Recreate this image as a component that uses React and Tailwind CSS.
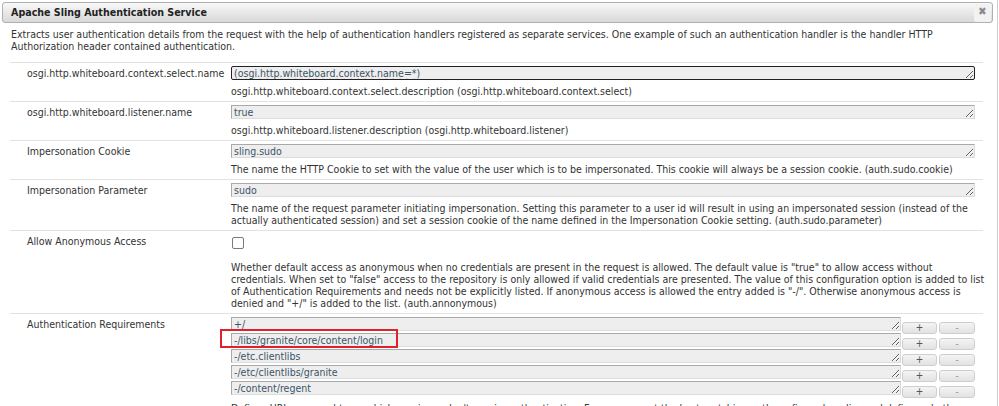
import React from "react";

const font = { fontFamily: '"DejaVu Sans Condensed", "DejaVu Sans", sans-serif', fontStretch: "condensed" };

const Field = ({ value, focused, squiggle }) => (
  <textarea
    readOnly
    rows={1}
    value={value}
    spellCheck={false}
    className={
      "block w-[744px] h-[14px] min-h-[14px] overflow-hidden bg-[#eeeeee] px-[2px] text-[10.5px] leading-[12px] text-[#3c5468] outline-none " +
      (focused
        ? "border border-[#222] rounded-[2px]"
        : "border border-t-[#a9a9a9] border-l-[#a9a9a9] border-r-[#dcdcdc] border-b-[#dcdcdc]")
    }
    style={squiggle ? { textDecoration: "underline wavy #d33", textUnderlineOffset: "1px" } : undefined}
  />
);

const Row = ({ label, children }) => (
  <div className="grid grid-cols-[221px_1fr] border-t border-[#e2e2e2] pt-[3px] pb-[4px]">
    <div className="pl-[17px] pt-[1px] leading-[12px]">{label}</div>
    <div className="-mr-[3px]">{children}</div>
  </div>
);

const Desc = ({ children, className = "" }) => (
  <p className={"mt-[5px] leading-[12px] " + className}>{children}</p>
);

const reqs = [
  "+/",
  "-/libs/granite/core/content/login",
  "-/etc.clientlibs",
  "-/etc/clientlibs/granite",
  "-/content/regent",
];

export default function App() {
  return (
    <div className="w-[999px] h-[406px] overflow-hidden bg-white text-[10.5px] text-[#333]" style={font}>
      <div className="w-[998px] h-[406px] border-r border-[#cfcfcf] pt-[2px] pl-[2px] pr-[4px]">
        <div className="flex h-[21px] items-center justify-between rounded-[3px] border border-[#b0b0b0] bg-gradient-to-b from-[#f8f8f8] to-[#d9d9d9] pl-[8px]">
          <span className="text-[10.6px] font-bold text-[#222]">Apache Sling Authentication Service</span>
          <span className="mr-[1px] flex h-[18px] w-[17px] items-center justify-center rounded-[2px] bg-[#f2f2f2] text-[11px] text-[#8a8a8a]">
            ✖
          </span>
        </div>

        <p className="px-[9px] pt-[5px] leading-[12px]">
          Extracts user authentication details from the request with the help of authentication handlers registered as separate services. One example of such an authentication handler is the handler HTTP Authorization header contained authentication.
        </p>

        <div className="mx-[8px] mt-[10px] mr-[10px]">
          <Row label="osgi.http.whiteboard.context.select.name">
            <Field value="(osgi.http.whiteboard.context.name=*)" focused squiggle />
            <Desc>osgi.http.whiteboard.context.select.description (osgi.http.whiteboard.context.select)</Desc>
          </Row>
          <Row label="osgi.http.whiteboard.listener.name">
            <Field value="true" />
            <Desc>osgi.http.whiteboard.listener.description (osgi.http.whiteboard.listener)</Desc>
          </Row>
          <Row label="Impersonation Cookie">
            <Field value="sling.sudo" />
            <Desc>
              The name the HTTP Cookie to set with the value of the user which is to be impersonated. This cookie will always be a session cookie. (auth.sudo.cookie)
            </Desc>
          </Row>
          <Row label="Impersonation Parameter">
            <Field value="sudo" />
            <Desc>
              The name of the request parameter initiating impersonation. Setting this parameter to a user id will result in using an impersonated session (instead of the actually authenticated session) and set a session cookie of the name defined in the Impersonation Cookie setting. (auth.sudo.parameter)
            </Desc>
          </Row>
          <Row label="Allow Anonymous Access">
            <input
              type="checkbox"
              className="ml-[1px] mt-[3px] block h-[12px] w-[12px] appearance-none rounded-[2px] border border-[#7a7a7a] bg-white"
            />
            <Desc className="mt-[12px]">
              Whether default access as anonymous when no credentials are present in the request is allowed. The default value is "true" to allow access without credentials. When set to "false" access to the repository is only allowed if valid credentials are presented. The value of this configuration option is added to list of Authentication Requirements and needs not be explicitly listed. If anonymous access is allowed the entry added is "-/". Otherwise anonymous access is denied and "+/" is added to the list. (auth.annonymous)
            </Desc>
          </Row>
          <Row label="Authentication Requirements">
            <div className="flex flex-col gap-[2px]">
              {reqs.map((r, i) => (
                <div key={r} className="relative flex items-end">
                  <textarea
                    readOnly
                    rows={1}
                    value={r}
                    spellCheck={false}
                    className="block w-[670px] h-[14px] min-h-[14px] overflow-hidden border border-t-[#a9a9a9] border-l-[#a9a9a9] border-r-[#dcdcdc] border-b-[#dcdcdc] bg-[#eeeeee] px-[2px] text-[10.5px] leading-[12px] text-[#3c5468] outline-none"
                  />
                  <button className="ml-[1px] mb-[-3px] h-[12px] w-[35px] rounded-[3px] border border-[#cfcfcf] bg-gradient-to-b from-[#f4f4f4] to-[#e2e2e2] text-[10px] leading-[10px] text-[#555]">
                    +
                  </button>
                  <button className="ml-[2px] mb-[-3px] h-[12px] w-[36px] rounded-[3px] border border-[#cfcfcf] bg-gradient-to-b from-[#f4f4f4] to-[#e2e2e2] text-[10px] leading-[10px] text-[#999]">
                    -
                  </button>
                  {i === 1 && (
                    <div className="absolute left-[-11px] top-[-4px] h-[19px] w-[178px] border-2 border-[#e0202a]" />
                  )}
                </div>
              ))}
            </div>
            <Desc className="mt-[7px]">
              Defines URL space subtrees which require or don't require authentication. For any request the best matching path configured applies and defines whether authentication is actually required for the request or not.
            </Desc>
          </Row>
        </div>
      </div>
    </div>
  );
}
